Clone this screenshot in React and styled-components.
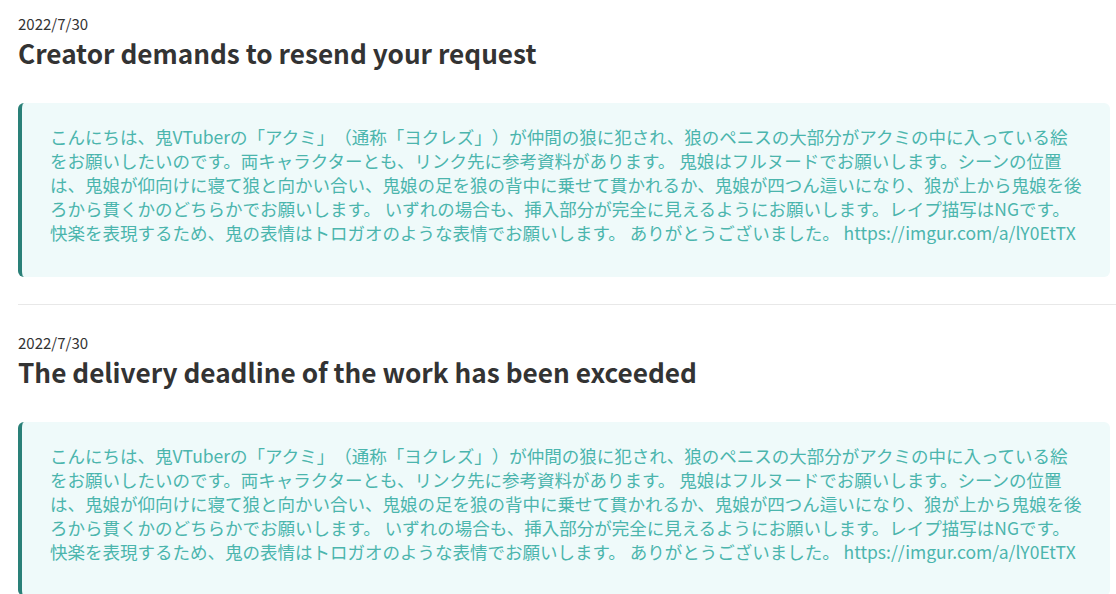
import React from "react";
import styled, { createGlobalStyle } from "styled-components";

const Global = createGlobalStyle`
  html, body { margin: 0; padding: 0; background: #ffffff; }
  body { font-family: "Noto Sans CJK JP", "Noto Sans", sans-serif; color: #333333; }
`;

const Page = styled.div`
  padding: 0 0 0 18px;
`;

const Item = styled.section`
  padding: 28px 6px 27px 0;
  border-bottom: 1px solid #e8e8e8;
  &:first-child { padding-top: 14px; }
`;

const DateText = styled.div`
  font-size: 15px;
  line-height: 20px;
  color: #333333;
`;

const Title = styled.h2`
  margin: 0;
  font-size: 26.2px;
  font-weight: 700;
  line-height: 38px;
  color: #333333;
`;

const Message = styled.div`
  margin-top: 31px;
  background: #effafa;
  border-left: 4px solid #2a8078;
  border-radius: 6px;
  padding: 22px 26px 32px 28px;
  font-size: 17.5px;
  line-height: 24px;
  color: #4bb5ad;
  overflow-wrap: anywhere;
  text-spacing-trim: space-all;
`;

const body =
  "こんにちは、鬼VTuberの「アクミ」（通称「ヨクレズ」）が仲間の狼に犯され、狼のペニスの大部分がアクミの中に入っている絵をお願いしたいのです。両キャラクターとも、リンク先に参考資料があります。 鬼娘はフルヌードでお願いします。シーンの位置は、鬼娘が仰向けに寝て狼と向かい合い、鬼娘の足を狼の背中に乗せて貫かれるか、鬼娘が四つん這いになり、狼が上から鬼娘を後ろから貫くかのどちらかでお願いします。 いずれの場合も、挿入部分が完全に見えるようにお願いします。レイプ描写はNGです。 快楽を表現するため、鬼の表情はトロガオのような表情でお願いします。 ありがとうございました。 https://imgur.com/a/lY0EtTX";

const items = [
  { date: "2022/7/30", title: "Creator demands to resend your request" },
  { date: "2022/7/30", title: "The delivery deadline of the work has been exceeded" },
];

export default function App() {
  return (
    <>
      <Global />
      <Page>
        {items.map((it, i) => (
          <Item key={i}>
            <DateText>{it.date}</DateText>
            <Title>{it.title}</Title>
            <Message>{body}</Message>
          </Item>
        ))}
      </Page>
    </>
  );
}
